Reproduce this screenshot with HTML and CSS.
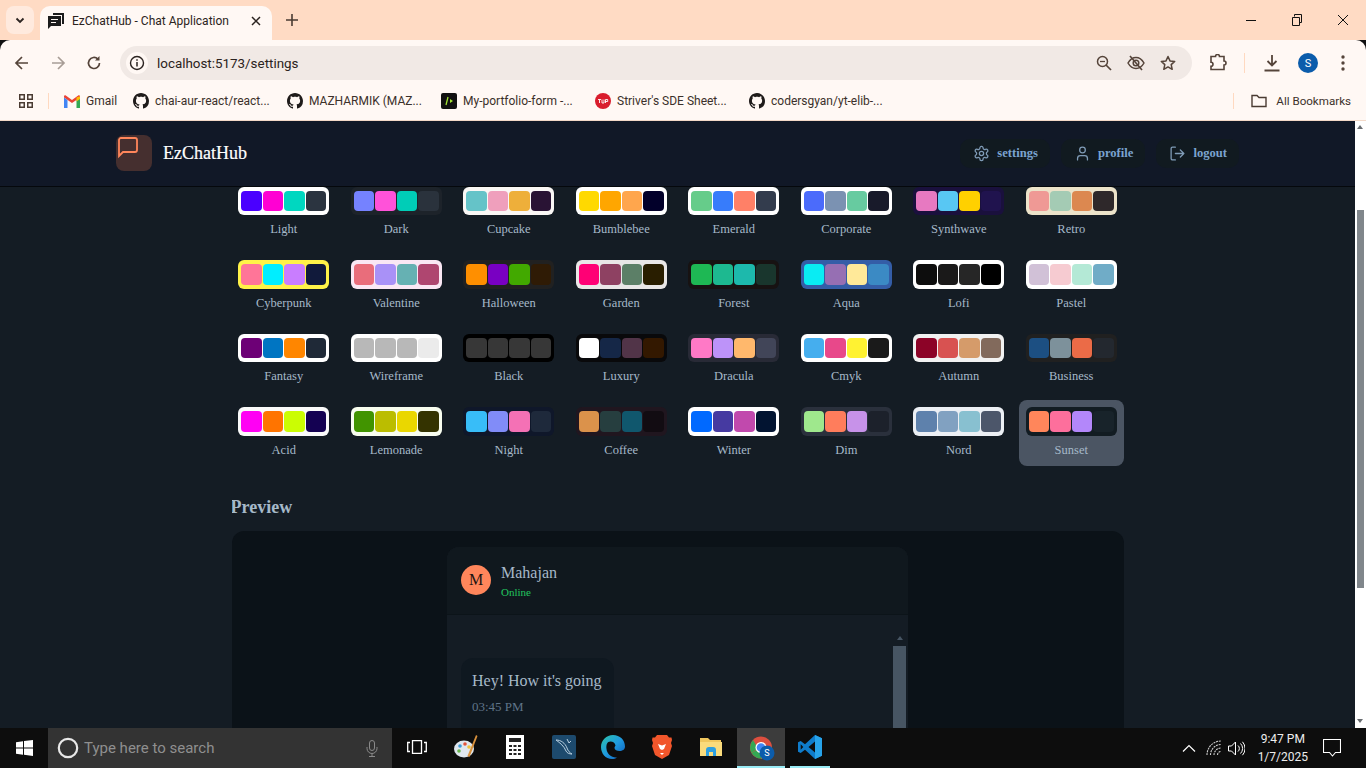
FILE: index.html
```html
<!DOCTYPE html>
<html lang="en">
<head>
<meta charset="utf-8">
<title>EzChatHub - Chat Application</title>
<link rel="stylesheet" href="styles.css">
</head>
<body>
<svg class="defs" width="0" height="0" aria-hidden="true">
  <symbol id="gh" viewBox="0 0 16 16"><path fill="#1f1b1a" d="M8 0C3.58 0 0 3.58 0 8c0 3.54 2.29 6.53 5.47 7.59.4.07.55-.17.55-.38 0-.19-.01-.82-.01-1.49-2.01.37-2.53-.49-2.69-.94-.09-.23-.48-.94-.82-1.13-.28-.15-.68-.52-.01-.53.63-.01 1.08.58 1.23.82.72 1.21 1.87.87 2.33.66.07-.52.28-.87.51-1.07-1.78-.2-3.64-.89-3.64-3.95 0-.87.31-1.59.82-2.15-.08-.2-.36-1.02.08-2.12 0 0 .67-.21 2.2.82.64-.18 1.32-.27 2-.27s1.36.09 2 .27c1.53-1.04 2.2-.82 2.2-.82.44 1.1.16 1.92.08 2.12.51.56.82 1.27.82 2.15 0 3.07-1.87 3.75-3.65 3.95.29.25.54.73.54 1.48 0 1.07-.01 1.93-.01 2.2 0 .21.15.46.55.38A8.01 8.01 0 0016 8c0-4.42-3.58-8-8-8z"/></symbol>
</svg>

<header class="tabstrip">
  <div class="tab-menu"><svg width="12" height="12" viewBox="0 0 12 12"><path d="M2.5 4.5 6 8l3.5-3.5" fill="none" stroke="#2b2320" stroke-width="1.8"/></svg></div>
  <div class="tab">
    <svg class="tab-fav" width="16" height="16" viewBox="0 0 16 16"><path fill="#1c1c1c" d="M5 0h11v11h-2V2H5z"/><path fill="#1c1c1c" d="M0 3h13v10H3l-3 3z"/><path stroke="#fff8f4" stroke-width="1" d="M3 6.5h7M3 9.5h5"/></svg>
    <span class="tab-title">EzChatHub - Chat Application</span>
    <svg class="tab-x" width="10" height="10" viewBox="0 0 10 10"><path d="M1 1l8 8M9 1l-8 8" stroke="#2b2320" stroke-width="1.5"/></svg>
  </div>
  <svg class="tab-plus" width="12" height="12" viewBox="0 0 12 12"><path d="M6 0v12M0 6h12" stroke="#4a3b32" stroke-width="1.6"/></svg>
  <div class="win-controls">
    <div class="win-btn"><svg width="10" height="10" viewBox="0 0 10 10"><path d="M0 5.5h10" stroke="#111" stroke-width="1"/></svg></div>
    <div class="win-btn"><svg width="10" height="12" viewBox="0 0 10 12"><path d="M2.5 2.500V.5h7v8h-2M.5 3.500h7v8h-7z" fill="none" stroke="#111"/></svg></div>
    <div class="win-btn"><svg width="12" height="12" viewBox="0 0 12 12"><path d="M1 1l10 10M11 1 1 11" stroke="#111" stroke-width="1"/></svg></div>
  </div>
</header>

<div class="toolbar">
  <svg class="tb-icon" width="16" height="16" viewBox="0 0 16 16"><path d="M14 8H2.500M8 2 2 8l6 6" fill="none" stroke="#55443a" stroke-width="1.700"/></svg>
  <svg class="tb-icon" width="16" height="16" viewBox="0 0 16 16"><path d="M2 8h11.500M8 2l6 6-6 6" fill="none" stroke="#a89d96" stroke-width="1.700"/></svg>
  <svg class="tb-icon" width="16" height="16" viewBox="0 0 16 16"><path d="M13.500 8a5.500 5.500 0 1 1-1.600-3.900" fill="none" stroke="#55443a" stroke-width="1.700"/><path d="M13.500 1v4.500H9z" fill="#55443a"/></svg>
  <div class="omnibox">
    <div class="site-info"><svg width="16" height="16" viewBox="0 0 16 16"><circle cx="8" cy="8" r="6.500" fill="none" stroke="#2b2320" stroke-width="1.400"/><path d="M8 7v4.500M8 4.300v1.500" stroke="#2b2320" stroke-width="1.500"/></svg></div>
    <span class="url">localhost:5173/settings</span>
    <div class="omni-icons">
      <svg width="16" height="16" viewBox="0 0 16 16"><circle cx="6.500" cy="6.500" r="5" fill="none" stroke="#55443a" stroke-width="1.500"/><path d="M10 10l5 5" stroke="#55443a" stroke-width="1.700"/><path d="M4 6.500h5" stroke="#55443a" stroke-width="1.300"/></svg>
      <svg width="18" height="16" viewBox="0 0 18 16"><path d="M1 8c2-3.500 4.800-5.500 8-5.500S15 4.500 17 8c-2 3.500-4.800 5.500-8 5.500S3 11.500 1 8z" fill="none" stroke="#55443a" stroke-width="1.500"/><circle cx="9" cy="8" r="2.800" fill="none" stroke="#55443a" stroke-width="1.500"/><path d="M3 1l12 14" stroke="#55443a" stroke-width="1.600"/></svg>
      <svg width="16" height="16" viewBox="0 0 16 16"><path d="M8 1.500l2 4.400 4.700.5-3.500 3.200 1 4.700L8 11.900l-4.200 2.400 1-4.700L1.300 6.400 6 5.900z" fill="none" stroke="#55443a" stroke-width="1.500" stroke-linejoin="round"/></svg>
    </div>
  </div>
  <div class="tb-right">
    <svg width="18" height="18" viewBox="0 0 18 18"><path d="M2 3h4.500a2 2 0 0 1 4 0H15v4.500a2 2 0 0 1 0 4V16H2v-3.200a2 2 0 0 0 0-4z" fill="none" stroke="#55443a" stroke-width="1.600" transform="translate(0 -.5)"/></svg>
    <span class="tb-divider"></span>
    <svg width="18" height="18" viewBox="0 0 18 18"><path d="M9 1v10M4.500 7 9 11.500 13.500 7M1.500 16.500h15" fill="none" stroke="#55443a" stroke-width="1.800"/></svg>
    <span class="avatar-s">S</span>
    <svg width="4" height="16" viewBox="0 0 4 16"><circle cx="2" cy="2" r="1.700" fill="#55443a"/><circle cx="2" cy="8" r="1.700" fill="#55443a"/><circle cx="2" cy="14" r="1.700" fill="#55443a"/></svg>
  </div>
</div>

<nav class="bookmarks">
  <svg class="bm-apps" width="14" height="14" viewBox="0 0 14 14"><path d="M.75.75h4.500v4.500H.75zM8.750.75h4.500v4.500h-4.500zM.75 8.750h4.500v4.500H.75zM8.750 8.750h4.500v4.500h-4.500z" fill="none" stroke="#4a3b32" stroke-width="1.500"/></svg>
  <span class="bm-divider bm-divider-left"></span>
  <div class="bm bm-gmail">
    <svg width="16" height="13" viewBox="0 0 16 13"><path d="M0 2.500 8 8l8-5.500V1.500C16 .5 15 0 14.200.4L8 5 1.800.4C1 0 0 .5 0 1.500z" fill="#ea4335"/><path d="M0 2.500V13h3.500V5z" fill="#4285f4"/><path d="M16 2.500V13h-3.500V5z" fill="#34a853"/><path d="M12.500 2.500 16 1.200V4l-3.500 2.500z" fill="#fbbc04"/></svg>
    <span>Gmail</span>
  </div>
  <div class="bm"><svg width="16" height="16"><use href="#gh"/></svg><span>chai-aur-react/react...</span></div>
  <div class="bm"><svg width="16" height="16"><use href="#gh"/></svg><span>MAZHARMIK (MAZ...</span></div>
  <div class="bm"><svg width="16" height="16" viewBox="0 0 16 16"><rect width="16" height="16" rx="2" fill="#111"/><path d="M5 12 7 4" stroke="#a3e635" stroke-width="1.300"/><path d="M9 6l3 2-3 2z" fill="#a3e635"/></svg><span>My-portfolio-form -...</span></div>
  <div class="bm"><svg width="16" height="16" viewBox="0 0 16 16"><circle cx="8" cy="8" r="8" fill="#d91d2d"/><path d="M3 6.500h3M4.500 6.500v3.500M7 6.500v3.500h2v-3.500M10.500 10V6.500h2.200v2h-2.200" fill="none" stroke="#fff" stroke-width=".9"/></svg><span>Striver's SDE Sheet...</span></div>
  <div class="bm"><svg width="16" height="16"><use href="#gh"/></svg><span>codersgyan/yt-elib-...</span></div>
  <div class="bm-end">
    <span class="bm-divider"></span>
    <svg width="16" height="14" viewBox="0 0 16 14"><path d="M1 12.500V1.500h5l2 2h7v9z" fill="none" stroke="#4a3b32" stroke-width="1.400"/></svg>
    <span>All Bookmarks</span>
  </div>
</nav>

<div class="viewport">
  <div class="page">
    <div class="navbar">
      <div class="brand">
        <div class="logo"><svg width="24" height="24" viewBox="0 0 24 24"><path d="M21 15a2 2 0 0 1-2 2H7l-4 4V5a2 2 0 0 1 2-2h14a2 2 0 0 1 2 2z" fill="none" stroke="#ff865b" stroke-width="1.800"/></svg></div>
        <span class="brand-name">EzChatHub</span>
      </div>
      <div class="nav-actions">
        <a class="nav-btn"><svg width="17" height="17" viewBox="0 0 24 24"><path d="M12.22 2h-.44a2 2 0 0 0-2 2v.18a2 2 0 0 1-1 1.730l-.43.25a2 2 0 0 1-2 0l-.15-.08a2 2 0 0 0-2.730.73l-.22.38a2 2 0 0 0 .73 2.730l.15.1a2 2 0 0 1 1 1.720v.51a2 2 0 0 1-1 1.740l-.15.09a2 2 0 0 0-.73 2.730l.22.38a2 2 0 0 0 2.730.73l.15-.08a2 2 0 0 1 2 0l.43.25a2 2 0 0 1 1 1.730V20a2 2 0 0 0 2 2h.44a2 2 0 0 0 2-2v-.18a2 2 0 0 1 1-1.730l.43-.25a2 2 0 0 1 2 0l.15.08a2 2 0 0 0 2.730-.73l.22-.39a2 2 0 0 0-.73-2.730l-.15-.08a2 2 0 0 1-1-1.740v-.5a2 2 0 0 1 1-1.740l.15-.09a2 2 0 0 0 .73-2.730l-.22-.38a2 2 0 0 0-2.730-.73l-.15.08a2 2 0 0 1-2 0l-.43-.25a2 2 0 0 1-1-1.730V4a2 2 0 0 0-2-2z"/><circle cx="12" cy="12" r="3"/></svg><span>settings</span></a>
        <a class="nav-btn"><svg width="17" height="17" viewBox="0 0 24 24"><path d="M19 21v-2a4 4 0 0 0-4-4H9a4 4 0 0 0-4 4v2"/><circle cx="12" cy="7" r="4"/></svg><span>profile</span></a>
        <a class="nav-btn"><svg width="17" height="17" viewBox="0 0 24 24"><path d="M9 21H5a2 2 0 0 1-2-2V5a2 2 0 0 1 2-2h4"/><path d="M16 17l5-5-5-5M21 12H9"/></svg><span>logout</span></a>
      </div>
    </div>
    <main class="content">
      <div class="theme-grid">
        <button class="theme"><span class="swatch" style="background:#fff"><i style="background:#4a00ff"></i><i style="background:#ff00d3"></i><i style="background:#00d7c0"></i><i style="background:#2b3440"></i></span><span class="theme-name">Light</span></button>
        <button class="theme"><span class="swatch" style="background:#1d232a"><i style="background:#7582ff"></i><i style="background:#ff52d9"></i><i style="background:#00cdb7"></i><i style="background:#2a323c"></i></span><span class="theme-name">Dark</span></button>
        <button class="theme"><span class="swatch" style="background:#faf7f5"><i style="background:#65c3c8"></i><i style="background:#ef9fbc"></i><i style="background:#eeaf3a"></i><i style="background:#291334"></i></span><span class="theme-name">Cupcake</span></button>
        <button class="theme"><span class="swatch" style="background:#fff"><i style="background:#ffd900"></i><i style="background:#ffa600"></i><i style="background:#ffa64d"></i><i style="background:#02002a"></i></span><span class="theme-name">Bumblebee</span></button>
        <button class="theme"><span class="swatch" style="background:#fff"><i style="background:#66cc8a"></i><i style="background:#377cfb"></i><i style="background:#ff8067"></i><i style="background:#333c4d"></i></span><span class="theme-name">Emerald</span></button>
        <button class="theme"><span class="swatch" style="background:#fff"><i style="background:#4b6bfb"></i><i style="background:#7b92b2"></i><i style="background:#67cba0"></i><i style="background:#181a2a"></i></span><span class="theme-name">Corporate</span></button>
        <button class="theme"><span class="swatch" style="background:#1a103d"><i style="background:#e779c1"></i><i style="background:#58c7f3"></i><i style="background:#ffd000"></i><i style="background:#20134e"></i></span><span class="theme-name">Synthwave</span></button>
        <button class="theme"><span class="swatch" style="background:#ece3ca"><i style="background:#ef9995"></i><i style="background:#a4cbb4"></i><i style="background:#dc8850"></i><i style="background:#2e282a"></i></span><span class="theme-name">Retro</span></button>

        <button class="theme"><span class="swatch" style="background:#fff248"><i style="background:#ff7598"></i><i style="background:#00eeff"></i><i style="background:#c97dff"></i><i style="background:#111a3b"></i></span><span class="theme-name">Cyberpunk</span></button>
        <button class="theme"><span class="swatch" style="background:#fae7f4"><i style="background:#e96d7b"></i><i style="background:#a991f7"></i><i style="background:#66b1b3"></i><i style="background:#af4670"></i></span><span class="theme-name">Valentine</span></button>
        <button class="theme"><span class="swatch" style="background:#212121"><i style="background:#ff8f00"></i><i style="background:#7900c2"></i><i style="background:#42a900"></i><i style="background:#2f1b05"></i></span><span class="theme-name">Halloween</span></button>
        <button class="theme"><span class="swatch" style="background:#e9e7e7"><i style="background:#ff0075"></i><i style="background:#8e4162"></i><i style="background:#5c7f67"></i><i style="background:#291e00"></i></span><span class="theme-name">Garden</span></button>
        <button class="theme"><span class="swatch" style="background:#171212"><i style="background:#1eb854"></i><i style="background:#1db990"></i><i style="background:#1db9ac"></i><i style="background:#19362d"></i></span><span class="theme-name">Forest</span></button>
        <button class="theme"><span class="swatch" style="background:#345da7"><i style="background:#09ecf3"></i><i style="background:#966fb3"></i><i style="background:#ffe999"></i><i style="background:#3b8ac4"></i></span><span class="theme-name">Aqua</span></button>
        <button class="theme"><span class="swatch" style="background:#fff"><i style="background:#0d0d0d"></i><i style="background:#1a1919"></i><i style="background:#262626"></i><i style="background:#000"></i></span><span class="theme-name">Lofi</span></button>
        <button class="theme"><span class="swatch" style="background:#fff"><i style="background:#d1c1d7"></i><i style="background:#f6cbd1"></i><i style="background:#b4e9d6"></i><i style="background:#70acc7"></i></span><span class="theme-name">Pastel</span></button>

        <button class="theme"><span class="swatch" style="background:#fff"><i style="background:#6d0076"></i><i style="background:#0075c2"></i><i style="background:#ff8600"></i><i style="background:#1f2937"></i></span><span class="theme-name">Fantasy</span></button>
        <button class="theme"><span class="swatch" style="background:#fff"><i style="background:#b8b8b8"></i><i style="background:#b8b8b8"></i><i style="background:#b8b8b8"></i><i style="background:#ebebeb"></i></span><span class="theme-name">Wireframe</span></button>
        <button class="theme"><span class="swatch" style="background:#000"><i style="background:#373737"></i><i style="background:#373737"></i><i style="background:#373737"></i><i style="background:#373737"></i></span><span class="theme-name">Black</span></button>
        <button class="theme"><span class="swatch" style="background:#09090b"><i style="background:#fff"></i><i style="background:#152747"></i><i style="background:#513448"></i><i style="background:#331800"></i></span><span class="theme-name">Luxury</span></button>
        <button class="theme"><span class="swatch" style="background:#282a36"><i style="background:#ff79c6"></i><i style="background:#bd93f9"></i><i style="background:#ffb86c"></i><i style="background:#414558"></i></span><span class="theme-name">Dracula</span></button>
        <button class="theme"><span class="swatch" style="background:#fff"><i style="background:#45aeee"></i><i style="background:#e8488a"></i><i style="background:#fff232"></i><i style="background:#1a1a1a"></i></span><span class="theme-name">Cmyk</span></button>
        <button class="theme"><span class="swatch" style="background:#f1f1f1"><i style="background:#8c0327"></i><i style="background:#d85251"></i><i style="background:#d59b6a"></i><i style="background:#826a5c"></i></span><span class="theme-name">Autumn</span></button>
        <button class="theme"><span class="swatch" style="background:#202020"><i style="background:#1c4f82"></i><i style="background:#7d919b"></i><i style="background:#eb6b47"></i><i style="background:#23282f"></i></span><span class="theme-name">Business</span></button>

        <button class="theme"><span class="swatch" style="background:#fafafa"><i style="background:#ff00f4"></i><i style="background:#ff7400"></i><i style="background:#cbfd03"></i><i style="background:#140152"></i></span><span class="theme-name">Acid</span></button>
        <button class="theme"><span class="swatch" style="background:#f8fdef"><i style="background:#419400"></i><i style="background:#bbbd00"></i><i style="background:#ead700"></i><i style="background:#343300"></i></span><span class="theme-name">Lemonade</span></button>
        <button class="theme"><span class="swatch" style="background:#0f172a"><i style="background:#38bdf8"></i><i style="background:#818cf8"></i><i style="background:#f471b5"></i><i style="background:#1e293b"></i></span><span class="theme-name">Night</span></button>
        <button class="theme"><span class="swatch" style="background:#20161f"><i style="background:#db924b"></i><i style="background:#263e3f"></i><i style="background:#10576d"></i><i style="background:#120c12"></i></span><span class="theme-name">Coffee</span></button>
        <button class="theme"><span class="swatch" style="background:#fff"><i style="background:#0069ff"></i><i style="background:#463aa1"></i><i style="background:#c149ad"></i><i style="background:#021431"></i></span><span class="theme-name">Winter</span></button>
        <button class="theme"><span class="swatch" style="background:#2a303c"><i style="background:#9fe88d"></i><i style="background:#ff7d5c"></i><i style="background:#c792e9"></i><i style="background:#1c212b"></i></span><span class="theme-name">Dim</span></button>
        <button class="theme"><span class="swatch" style="background:#eceff4"><i style="background:#5e81ac"></i><i style="background:#81a1c1"></i><i style="background:#88c0d0"></i><i style="background:#4c566a"></i></span><span class="theme-name">Nord</span></button>
        <button class="theme theme-active"><span class="swatch" style="background:#121c22"><i style="background:#ff865b"></i><i style="background:#fd6f9c"></i><i style="background:#b387fa"></i><i style="background:#18232a"></i></span><span class="theme-name">Sunset</span></button>
      </div>

      <h3 class="preview-title">Preview</h3>
      <section class="preview">
        <div class="chat-card">
          <div class="chat-head">
            <div class="chat-avatar">M</div>
            <div class="chat-who">
              <div class="chat-name">Mahajan</div>
              <div class="chat-status">Online</div>
            </div>
          </div>
          <div class="chat-body">
            <div class="bubble">
              <p class="bubble-text">Hey! How it's going</p>
              <p class="bubble-time">03:45 PM</p>
            </div>
            <div class="chat-scroll"><span class="arrow-up"></span><span class="chat-thumb"></span></div>
          </div>
        </div>
      </section>
    </main>
  </div>
  <div class="page-scroll">
    <span class="ps-up"></span>
    <span class="ps-thumb"></span>
    <span class="ps-down"></span>
  </div>
</div>

<footer class="taskbar">
  <div class="start"><svg width="17" height="16" viewBox="0 0 17 16"><path fill="#fff" d="M0 2.300 7 1.300v6.300H0zM8 1.100 17 0v7.600H8zM0 8.500h7v6.300l-7-1zM8 8.500h9V16l-9-1.200z"/></svg></div>
  <div class="search">
    <svg width="22" height="22" viewBox="0 0 22 22"><circle cx="11" cy="11" r="9.200" fill="none" stroke="#e8e8e8" stroke-width="2.200"/></svg>
    <span class="search-text">Type here to search</span>
    <svg class="mic" width="12" height="17" viewBox="0 0 12 17"><rect x="3.500" y=".5" width="5" height="10" rx="2.500" fill="none" stroke="#8a8a8a"/><path d="M1 7v1.500a5 5 0 0 0 10 0V7M6 13.500V16.500M3 16.500h6" fill="none" stroke="#8a8a8a"/></svg>
  </div>
  <div class="tb-app"><svg width="20" height="14" viewBox="0 0 20 14"><path d="M5.500.7h9v12.600h-9zM3 2.500H.7v9H3M17 2.500h2.300v9H17" fill="none" stroke="#fff" stroke-width="1.300"/></svg></div>
  <div class="tb-app"><svg width="24" height="26" viewBox="0 0 24 26"><ellipse cx="10" cy="15" rx="10" ry="8.500" fill="#dfe6ee"/><circle cx="6" cy="12" r="1.800" fill="#3c9ad8"/><circle cx="11" cy="10" r="1.800" fill="#e2533c"/><circle cx="5" cy="17" r="1.800" fill="#69b64d"/><circle cx="15" cy="13" r="1.800" fill="#f0c23b"/><path d="M22 1l1.500 1-8 21-2-1z" fill="#d9913c"/></svg></div>
  <div class="tb-app"><svg width="18" height="24" viewBox="0 0 18 24"><rect width="18" height="24" fill="#fff"/><rect x="3" y="3" width="12" height="4" fill="#222"/><path fill="#222" d="M3 10h3v2H3zM7.500 10h3v2h-3zM12 10h3v2h-3zM3 14h3v2H3zM7.500 14h3v2h-3zM12 14h3v2h-3zM3 18h3v2H3zM7.500 18h3v2h-3zM12 18h3v2h-3z"/></svg></div>
  <div class="tb-app"><svg width="24" height="24" viewBox="0 0 24 24"><rect width="24" height="24" rx="2" fill="#1d4a6d"/><path d="M4 5c5 0 9 3 11 8 1 3 3 5 5 6-3 0-5-1-6-3-2-5-6-8-10-11z M15 4l2 4 2-2" fill="none" stroke="#b8cfe0" stroke-width="1"/></svg></div>
  <div class="tb-app"><svg width="24" height="24" viewBox="0 0 24 24"><defs><linearGradient id="edge" x1="0" y1="0" x2="1" y2="1"><stop offset="0" stop-color="#2ec4a6"/><stop offset=".5" stop-color="#1f9be0"/><stop offset="1" stop-color="#0c58b8"/></linearGradient></defs><path d="M12 0c7 0 12 5 12 11.500 0 3-2.500 4.500-5.500 4.500-2.500 0-5-1-5-3 0-1 .5-1.500 1-2.500C14 8 12 6.500 9.500 6.500 6 6.500 5 10 5.500 14c.5 5 5 9 10.500 8.500-1.500 1-3 1.500-5 1.500C4.500 24 0 18.500 0 12 0 5 5.500 0 12 0z" fill="url(#edge)"/></svg></div>
  <div class="tb-app"><svg width="20" height="24" viewBox="0 0 20 24"><path d="M5 0h10l2 2.500 2.500 0L20 5l-1 3 1 3-3 9-7 4-7-4-3-9 1-3-1-3 .5-2.500L3 2.500z" fill="#f1562b"/><path d="M6 9l4 1.500L14 9l-2 5-2 1-2-1zM8 18h4l-2 2z" fill="#fff"/></svg></div>
  <div class="tb-app"><svg width="22" height="20" viewBox="0 0 22 20"><path d="M0 1h8l2 2h11v15a1 1 0 0 1-1 1H0z" fill="#f0c75e"/><path d="M0 5h22v14H0z" fill="#fadb7c"/><path d="M6 19v-6a3 3 0 0 1 3-3h4a3 3 0 0 1 3 3v6h-3v-4H9v4z" fill="#2d9fe0"/></svg></div>
  <div class="tb-app tb-active">
    <svg width="28" height="28" viewBox="0 0 28 28"><g transform="translate(2 1.500)"><circle cx="12" cy="13" r="11" fill="#dd4f3f"/><path d="M12 13 2.500 18.500A11 11 0 0 0 12 24z" fill="#34a853"/><path d="M12 13h11a11 11 0 0 1-11 11z" fill="#fbbc04"/><path d="M1 13A11 11 0 0 1 4 5.500L9 14l-6.500 4.500A11 11 0 0 1 1 13z" fill="#34a853"/><circle cx="12" cy="13" r="5.500" fill="#fff"/><circle cx="12" cy="13" r="4.300" fill="#4285f4"/></g><circle cx="20" cy="20" r="7.500" fill="#0b5cab"/><text x="20" y="23.200" class="tb-s">S</text></svg>
  </div>
  <div class="tb-app tb-running"><svg width="24" height="24" viewBox="0 0 24 24"><path fill="#0f7ccb" d="M17 0l7 3.300v17.400L17 24 7 14.800 2.700 18 0 16.700V7.300L2.700 6 7 9.200zM17 6.500 10.500 12l6.500 5.500zM2.700 9.300v5.400L5.300 12z"/><path fill="#27a3ea" d="M17 0l7 3.300v17.400L17 24z"/></svg></div>
  <div class="tray">
    <svg class="tray-chevron" width="14" height="8" viewBox="0 0 14 8"><path d="M1 7.500 7 1.500l6 6" fill="none" stroke="#fff" stroke-width="1.200"/></svg>
    <svg class="tray-wifi" width="18" height="16" viewBox="0 0 18 16"><path d="M1 15A14 14 0 0 1 15 1M4.500 15A10.500 10.500 0 0 1 15 4.500M8 15a7 7 0 0 1 7-7M11.500 15A3.500 3.500 0 0 1 15 11.500" fill="none" stroke="#cfcfcf" stroke-width="1.100" stroke-dasharray="2 .8"/></svg>
    <svg class="tray-vol" width="17" height="15" viewBox="0 0 17 15"><path d="M.5 5h3l4-4v13l-4-4h-3zM10 4.500a4 4 0 0 1 0 6M12.500 2.500a7 7 0 0 1 0 10M14.500.8a10 10 0 0 1 0 13.400" fill="none" stroke="#fff" stroke-width="1"/></svg>
    <div class="clock"><div>9:47 PM</div><div>1/7/2025</div></div>
    <svg class="notif" width="18" height="18" viewBox="0 0 18 18"><path d="M.5.5h17v13h-5l-3 3.500-3-3.500h-6z" fill="none" stroke="#fff" stroke-width="1.100"/></svg>
  </div>
</footer>
</body>
</html>
```
FILE: styles.css
```css
* { box-sizing: border-box; }
html, body { margin: 0; padding: 0; }
body {
  width: 1366px; height: 768px; overflow: hidden;
  display: flex; flex-direction: column;
  font-family: Roboto, "Liberation Sans", sans-serif;
  background: #111;
}
.defs { position: absolute; }

/* browser chrome */
.tabstrip { height: 40px; flex: none; background: #ffdbc4; display: flex; align-items: flex-end; position: relative; }
.tab-menu { width: 28px; height: 28px; margin: 0 6px 6px 6px; border-radius: 8px; background: #ffeade; display: flex; align-items: center; justify-content: center; }
.tab { width: 232px; height: 34px; background: #fff8f4; border-radius: 10px 10px 0 0; display: flex; align-items: center; padding: 0 11px 5px 8px; color: #2b2320; font-size: 12px; }
.tab-fav { flex: none; }
.tab-title { margin-left: 8px; flex: 1; white-space: nowrap; }
.tab-plus { margin: 0 0 14px 14px; }
.win-controls { margin-left: auto; display: flex; align-self: stretch; }
.win-btn { width: 46px; display: flex; align-items: center; justify-content: center; }

.toolbar { height: 46px; flex: none; background: #fff8f4; border-radius: 10px 10px 0 0; display: flex; align-items: center; padding: 0 14px; }
.tb-icon { margin-right: 20px; flex: none; }
.omnibox { width: 1072px; height: 34px; margin-left: -2px; background: #f1e9e5; border-radius: 17px; display: flex; align-items: center; padding: 0 16px 0 6px; flex: none; }
.site-info { width: 22px; height: 22px; border-radius: 50%; background: #fff8f4; display: flex; align-items: center; justify-content: center; }
.url { margin-left: 9px; font-size: 13.400px; color: #2b2320; }
.omni-icons { margin-left: auto; display: flex; align-items: center; gap: 15px; }
.tb-right { margin-left: 17px; display: flex; align-items: center; }
.tb-divider { width: 1px; height: 20px; background: #ffd9c0; margin: 0 18px 0 17px; }
.avatar-s { width: 20px; height: 20px; border-radius: 50%; background: #0b5cab; color: #fff; font-size: 11px; display: flex; align-items: center; justify-content: center; margin: 0 23px 0 17px; }

.bookmarks { height: 35px; flex: none; background: #fff8f4; border-bottom: 1px solid #f3d9c8; display: flex; align-items: center; padding: 0 15px 4px 19px; font-size: 12px; color: #3b302a; }
.bm-apps { flex: none; }
.bm-divider { width: 1px; height: 16px; background: #ffd9c0; }
.bm-divider-left { margin: 0 15px; }
.bm { width: 154px; display: flex; align-items: center; gap: 6px; white-space: nowrap; flex: none; }
.bm-gmail { width: 69px; }
.bm-end { margin-left: auto; display: flex; align-items: center; font-size: 11.600px; }
.bm-end svg { margin: 0 9px 0 17px; }

/* page */
.viewport { flex: 1; display: flex; min-height: 0; }
.page { flex: 1; display: flex; flex-direction: column; min-width: 0; overflow: hidden; background: #141c24; font-family: "Liberation Serif", serif; }
.navbar { height: 66px; flex: none; background: #111827; border-bottom: 1px solid #05080c; display: flex; align-items: center; padding: 0 116px 1px; justify-content: space-between; position: relative; z-index: 2; }
.brand { display: flex; align-items: center; gap: 11px; }
.logo { width: 36px; height: 36px; border-radius: 8px; background: #452f2f; }
.brand-name { font-size: 18px; color: #fff; -webkit-text-stroke: .2px #fff; }
.nav-actions { display: flex; gap: 11px; }
.nav-btn { height: 29px; display: flex; align-items: center; gap: 7px; border-radius: 10px; background: #111a20; font-size: 12.600px; font-weight: 700; color: #7ba3cf; padding: 0 12px 0 13px; }
.nav-btn svg { fill: none; stroke: #7f9bb6; stroke-width: 1.800; stroke-linecap: round; stroke-linejoin: round; flex: none; }

.content { flex: 1; min-height: 0; width: 892px; margin: 0 auto; overflow: hidden; }
.theme-grid { display: grid; grid-template-columns: repeat(8, 104.500px); gap: 8px; margin-top: -7.400px; }
.theme { border: 0; background: none; padding: 7px 6.750px 0; height: 65.600px; border-radius: 8px; display: flex; flex-direction: column; align-items: stretch; font: inherit; }
.theme-active { background: #4b5563; }
.swatch { height: 28.600px; border-radius: 6px; padding: 4px 3px; display: grid; grid-template-columns: repeat(4, 1fr); gap: 1px; }
.swatch i { border-radius: 4px; }
.theme-name { display: block; text-align: center; font-size: 12.500px; line-height: 15px; margin-top: 7px; color: #a6b9c9; }

.preview-title { margin: 29px 0 0 -1px; font-size: 18px; line-height: 24px; font-weight: 700; color: #a6b9c9; }
.preview { margin-top: 12px; height: 400px; border-radius: 12px; background: #0b1218; padding-top: 16px; display: flex; justify-content: center; }
.chat-card { width: 461px; border-radius: 12px 12px 0 0; background: #141c24; overflow: hidden; }
.chat-head { height: 68px; background: #10181e; border-bottom: 1px solid #0c1419; display: flex; align-items: center; padding: 0 14px; gap: 10px; }
.chat-avatar { width: 30px; height: 30px; border-radius: 50%; background: #ff865b; color: #1c1411; display: flex; align-items: center; justify-content: center; font-size: 16px; }
.chat-name { font-size: 16px; line-height: 20px; margin-top: 1px; color: #a6b9c9; }
.chat-status { font-size: 11px; line-height: 14px; margin-top: 2px; color: #22c55e; }
.chat-body { position: relative; padding: 43px 14px 0; }
.bubble { width: 153px; height: 120px; background: #0f1820; border-radius: 12px; padding: 13px 11px; }
.bubble-text { margin: 0; font-size: 16px; line-height: 20px; color: #a6b9c9; white-space: nowrap; }
.bubble-time { margin: 8px 0 0; font-size: 13px; line-height: 16px; color: #5f7488; }
.chat-scroll { position: absolute; right: 2px; top: 21px; width: 13px; }
.arrow-up { display: block; width: 0; height: 0; margin: 0 auto 6px; border: 3.500px solid transparent; border-top: 0; border-bottom: 4px solid #475563; }
.chat-thumb { display: block; height: 200px; background: #475563; }

.page-scroll { width: 11px; flex: none; background: #fff; position: relative; }
.ps-up { position: absolute; top: 4px; left: 2px; border: 3.500px solid transparent; border-top: 0; border-bottom: 4px solid #686c70; }
.ps-thumb { position: absolute; top: 89px; left: 2px; width: 7px; height: 378px; background: #80868b; }
.ps-down { position: absolute; bottom: 5px; left: 2px; border: 3.500px solid transparent; border-bottom: 0; border-top: 4px solid #686c70; }

/* taskbar */
.taskbar { height: 40px; flex: none; background: #0d0d0d; display: flex; align-items: stretch; color: #fff; position: relative; z-index: 3; }
.start { width: 48px; display: flex; align-items: center; justify-content: center; }
.search { width: 344px; background: #333; display: flex; align-items: center; padding: 0 12px 0 9px; color: #8f8f8f; }
.search-text { margin-left: 5px; font-size: 15px; }
.mic { margin-left: auto; margin-right: 2px; }
.tb-app { width: 49px; display: flex; align-items: center; justify-content: center; border-bottom: 2px solid transparent; }
.tb-active { width: 48px; margin-left: 2px; background: #3c3c3c; border-bottom-color: #99ebf5; }
.tb-running { width: 40px; margin-left: 5px; border-bottom-color: #99ebf5; }
.tb-s { font: 9px Roboto, sans-serif; fill: #fff; text-anchor: middle; }
.tray { margin-left: auto; display: flex; align-items: center; padding-right: 25px; }
.tray-wifi { margin-left: 10px; }
.tray-vol { margin-left: 4.500px; }
.clock { font-size: 12px; line-height: 18px; text-align: center; color: #eee; margin: 0 15px 0 12.500px; }
```
